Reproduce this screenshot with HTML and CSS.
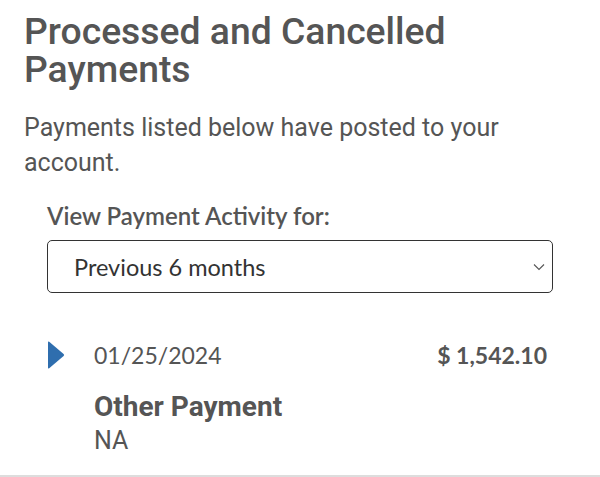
FILE: index.html
```html
<!DOCTYPE html>
<html>
<head>
<meta charset="utf-8">
<link rel="stylesheet" href="styles.css">
</head>
<body>
<main class="page">
  <h1 class="title">Processed and Cancelled Payments</h1>
  <p class="intro">Payments listed below have posted to your account.</p>
  <section class="filter">
    <label class="filter-label">View Payment Activity for:</label>
    <div class="select">
      <span class="select-value">Previous 6 months</span>
      <svg class="chevron" width="12" height="8" viewBox="0 0 12 8"><path d="M1 1.5 L6 6.5 L11 1.5" fill="none" stroke="#555" stroke-width="1.1"/></svg>
    </div>
  </section>
  <section class="payment">
    <div class="payment-head">
      <svg class="toggle" width="18" height="28" viewBox="0 0 18 28"><path d="M2.2 0.8 Q1 0 1 1.6 V26.4 Q1 28 2.2 27.2 L16.6 15 Q17.6 14 16.6 13 Z" fill="#2f6eae"/></svg>
      <span class="date">01/25/2024</span>
      <span class="amount">$ 1,542.10</span>
    </div>
    <div class="payment-body">
      <div class="type">Other Payment</div>
      <div class="note">NA</div>
    </div>
  </section>
</main>
</body>
</html>
```
FILE: styles.css
```css
html, body {
  margin: 0;
  padding: 0;
  background: #fff;
}
.page {
  padding: 12px 24px 0 24px;
  color: #555;
  font-family: Roboto, "Liberation Sans", sans-serif;
  border-bottom: 2px solid #ddd;
  height: 463px;
  box-sizing: content-box;
}
.title {
  margin: 0;
  font-size: 37.3px;
  line-height: 38px;
  font-weight: 500;
  color: #555;
}
.intro {
  margin: 22px 0 0 0;
  font-size: 25px;
  line-height: 35px;
  color: #555;
}
.filter {
  padding: 0 23px;
  margin-top: 22px;
}
.filter-label {
  display: block;
  font-family: Lato, sans-serif;
  font-size: 24px;
  font-weight: 600;
  line-height: 28px;
  color: #555;
}
.select {
  margin-top: 10px;
  height: 51px;
  border: 1px solid #333;
  border-radius: 5px;
  display: flex;
  align-items: center;
  justify-content: space-between;
  padding: 0 7px 0 26px;
}
.select-value {
  font-family: Lato, sans-serif;
  font-size: 23.5px;
  color: #333;
}
.payment {
  padding: 0 29px 0 23px;
  margin-top: 48px;
}
.payment-head {
  display: flex;
  align-items: center;
}
.toggle {
  flex: none;
}
.date {
  margin-left: 29px;
  font-family: Lato, sans-serif;
  font-size: 23px;
  color: #555;
}
.amount {
  margin-left: auto;
  font-family: Lato, sans-serif;
  font-size: 23px;
  font-weight: 700;
  color: #555;
}
.payment-body {
  padding-left: 47px;
  margin-top: 22px;
}
.type {
  font-size: 28px;
  font-weight: 700;
  line-height: 32px;
}
.note {
  margin-top: 2px;
  font-size: 25px;
  line-height: 31px;
}
```
